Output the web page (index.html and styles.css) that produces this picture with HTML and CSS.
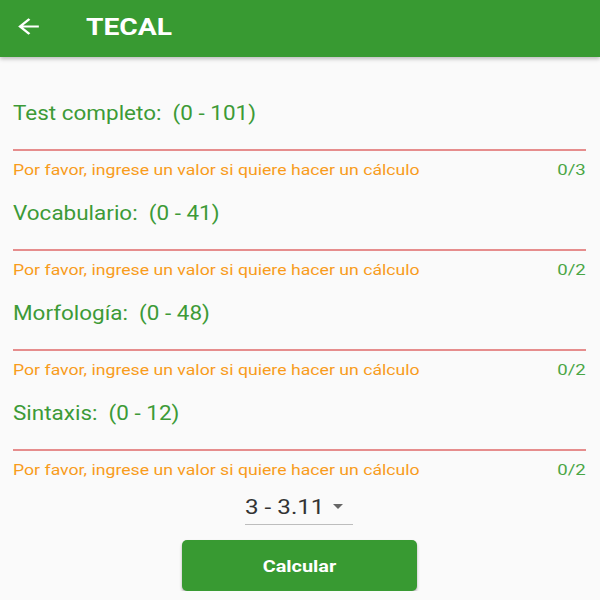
FILE: index.html
```html
<!DOCTYPE html>
<html>
<head>
<meta charset="utf-8">
<link rel="stylesheet" href="styles.css">
</head>
<body>
<header class="appbar">
  <svg class="back" width="31" height="25" viewBox="0 0 24 24" preserveAspectRatio="none"><path d="M20 11H7.83l5.59-5.59L12 4l-8 8 8 8 1.41-1.41L7.83 13H20v-2z" fill="#fff"/></svg>
  <h1 class="title"><span class="wide">TECAL</span></h1>
</header>
<main class="content">
  <div class="field">
    <div class="label"><span class="wide">Test completo:&nbsp; (0 - 101)</span></div>
    <div class="line"></div>
    <div class="helper"><span class="msg">Por favor, ingrese un valor si quiere hacer un cálculo</span><span class="count">0/3</span></div>
  </div>
  <div class="field">
    <div class="label"><span class="wide">Vocabulario:&nbsp; (0 - 41)</span></div>
    <div class="line"></div>
    <div class="helper"><span class="msg">Por favor, ingrese un valor si quiere hacer un cálculo</span><span class="count">0/2</span></div>
  </div>
  <div class="field">
    <div class="label"><span class="wide">Morfología:&nbsp; (0 - 48)</span></div>
    <div class="line"></div>
    <div class="helper"><span class="msg">Por favor, ingrese un valor si quiere hacer un cálculo</span><span class="count">0/2</span></div>
  </div>
  <div class="field">
    <div class="label"><span class="wide">Sintaxis:&nbsp; (0 - 12)</span></div>
    <div class="line"></div>
    <div class="helper"><span class="msg">Por favor, ingrese un valor si quiere hacer un cálculo</span><span class="count">0/2</span></div>
  </div>
  <div class="dropdown">
    <span class="value">3 - 3.11</span>
    <span class="arrow"></span>
  </div>
  <button class="calc"><span class="btn-text">Calcular</span></button>
</main>
</body>
</html>
```
FILE: styles.css
```css
html, body {
  margin: 0;
  padding: 0;
  background: #fafafa;
  font-family: Roboto, "Liberation Sans", sans-serif;
}
.appbar {
  height: 57px;
  background: #389a32;
  display: flex;
  align-items: center;
  box-shadow: 0 2px 4px rgba(0,0,0,0.25);
  position: relative;
}
.back {
  margin-left: 13px;
  margin-top: -4px;
}
.title {
  margin: -3px 0 0 42px;
  color: #fff;
  font-size: 23.5px;
  font-weight: 700;
}
.wide {
  display: inline-block;
  transform-origin: left center;
}
.title .wide {
  transform: scaleX(1.2);
}
.content {
  padding: 42px 14px 0 13px;
  display: flex;
  flex-direction: column;
}
.field {
  margin-bottom: 20px;
}
.label {
  margin-top: 2px;
  color: #3d9a37;
  font-size: 21px;
  line-height: 24px;
  height: 24px;
}
.label .wide {
  transform: scaleX(1.07);
}
.line {
  margin-top: 24px;
  height: 2px;
  background: #e06a6a;
  transform: scaleY(0.75);
}
.helper {
  margin-top: 10px;
  display: flex;
  justify-content: space-between;
  color: #f89c1c;
  font-size: 15.5px;
  line-height: 18px;
}
.msg {
  display: inline-block;
  transform: scaleX(1.14);
  transform-origin: left center;
}
.count {
  display: inline-block;
  color: #4aa645;
  transform: scaleX(1.2);
  transform-origin: right center;
}
.dropdown {
  align-self: center;
  width: 108px;
  height: 36px;
  margin-top: -10px;
  margin-left: -2px;
  border-bottom: 1px solid #bdbdbd;
  display: flex;
  align-items: center;
  box-sizing: border-box;
}
.value {
  display: inline-block;
  width: 66px;
  color: #333;
  font-size: 20.5px;
  transform: scaleX(1.18);
  transform-origin: left center;
  white-space: nowrap;
}
.arrow {
  margin-left: 22px;
  width: 0;
  height: 0;
  border-left: 5.5px solid transparent;
  border-right: 5.5px solid transparent;
  border-top: 5px solid #666;
}
.calc {
  align-self: center;
  margin-top: 15px;
  margin-left: -1px;
  width: 235px;
  height: 51px;
  background: #389a32;
  color: #fff;
  border: none;
  border-radius: 5px;
  font-family: Roboto, "Liberation Sans", sans-serif;
  font-size: 17px;
  font-weight: 700;
  box-shadow: 0 2px 3px rgba(0,0,0,0.3);
}
.btn-text {
  display: inline-block;
  transform: scaleX(1.17);
}
```
